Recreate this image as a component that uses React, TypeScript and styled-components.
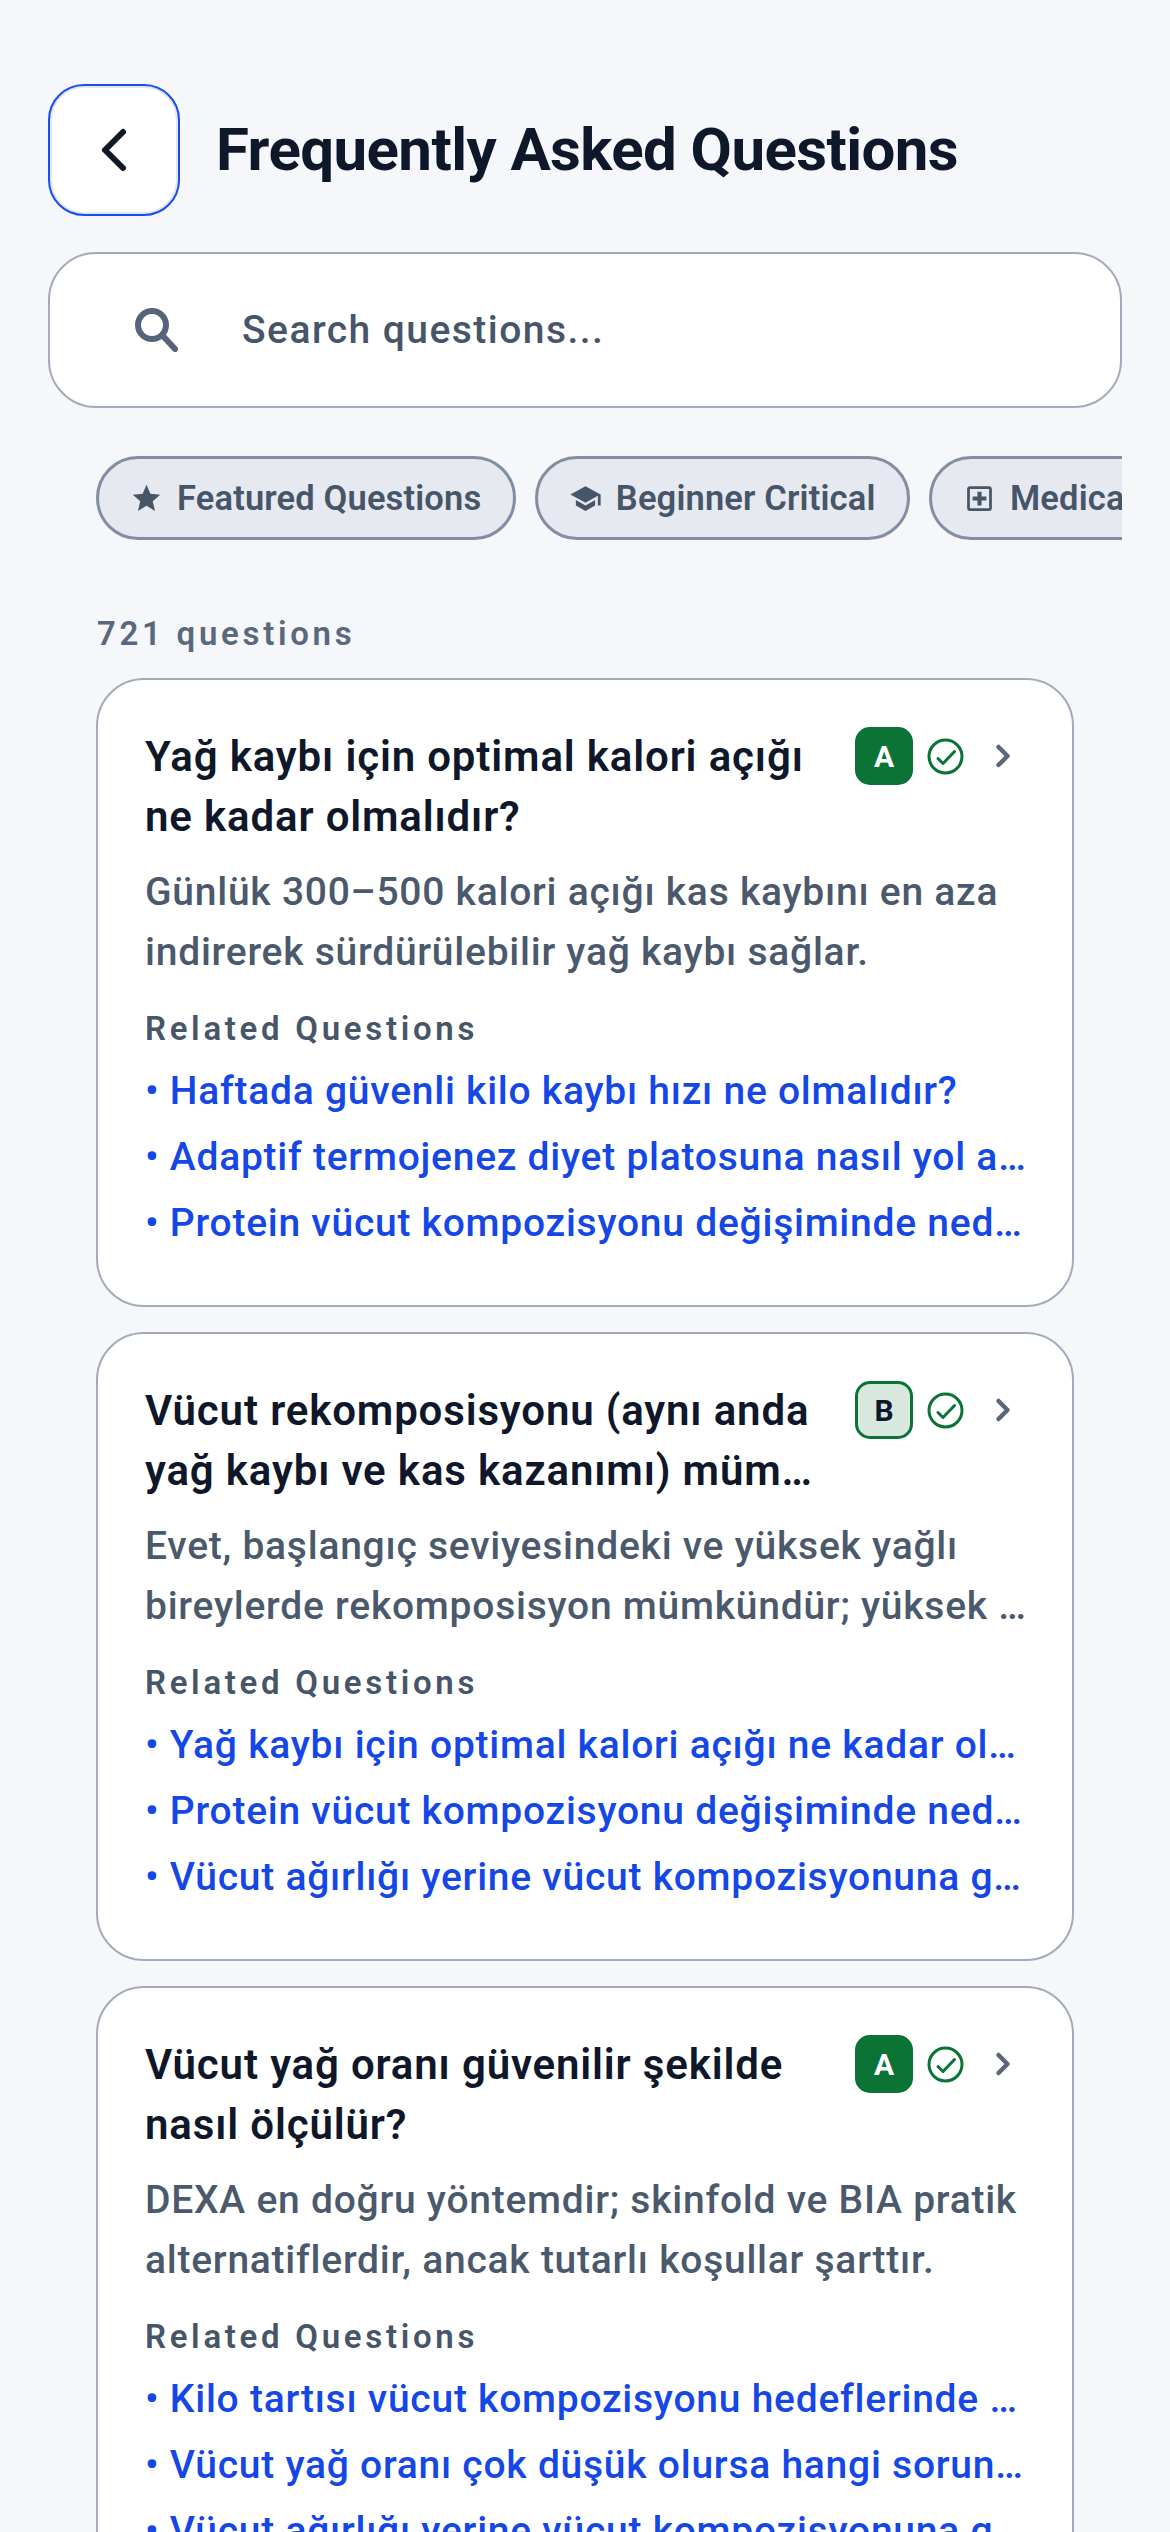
import styled, { createGlobalStyle } from "styled-components";
import { ChevronLeft, ChevronRight } from "lucide-react";
import { MdStar, MdSchool, MdOutlineLocalHospital } from "react-icons/md";

const GlobalStyle = createGlobalStyle`
  html, body {
    margin: 0;
    background: #f5f7fb;
    font-family: Roboto, "Noto Sans", sans-serif;
  }
`;

const questions = [
  {
    title: ["Yağ kaybı için optimal kalori açığı", "ne kadar olmalıdır?"],
    grade: "A",
    body: ["Günlük 300–500 kalori açığı kas kaybını en aza", "indirerek sürdürülebilir yağ kaybı sağlar."],
    related: [
      "Haftada güvenli kilo kaybı hızı ne olmalıdır?",
      "Adaptif termojenez diyet platosuna nasıl yol açar?",
      "Protein vücut kompozisyonu değişiminde neden önemlidir?",
    ],
  },
  {
    title: ["Vücut rekomposisyonu (aynı anda", "yağ kaybı ve kas kazanımı) mümkün müdür?"],
    grade: "B",
    body: [
      "Evet, başlangıç seviyesindeki ve yüksek yağlı",
      "bireylerde rekomposisyon mümkündür; yüksek protein gerektirir.",
    ],
    related: [
      "Yağ kaybı için optimal kalori açığı ne kadar olmalıdır?",
      "Protein vücut kompozisyonu değişiminde neden önemlidir?",
      "Vücut ağırlığı yerine vücut kompozisyonuna göre mi izlemeliyim?",
    ],
  },
  {
    title: ["Vücut yağ oranı güvenilir şekilde", "nasıl ölçülür?"],
    grade: "A",
    body: ["DEXA en doğru yöntemdir; skinfold ve BIA pratik", "alternatiflerdir, ancak tutarlı koşullar şarttır."],
    related: [
      "Kilo tartısı vücut kompozisyonu hedeflerinde neden yanıltıcıdır?",
      "Vücut yağ oranı çok düşük olursa hangi sorunlar oluşur?",
      "Vücut ağırlığı yerine vücut kompozisyonuna göre mi izlemeliyim?",
    ],
  },
];

const Page = styled.div`
  height: 2532px;
  overflow: hidden;
  box-sizing: border-box;
  padding-top: 84px;
  background: #f5f7fb;
`;

const Header = styled.header`
  display: flex;
  align-items: center;
  gap: 36px;
  padding: 0 48px;
`;

const BackButton = styled.button`
  width: 132px;
  height: 132px;
  box-sizing: border-box;
  display: flex;
  align-items: center;
  justify-content: center;
  padding: 0;
  background: #fff;
  border: 4px solid #e2e6ee;
  border-radius: 36px;
  outline: 2px solid #1a4fef;
  outline-offset: -2px;
  color: #111827;
`;

const Title = styled.h1`
  margin: 0;
  font-size: 60px;
  line-height: 72px;
  font-weight: 700;
  letter-spacing: -0.58px;
  color: #0f172a;
`;

const SearchBox = styled.div`
  margin: 36px 48px 0;
  height: 156px;
  box-sizing: border-box;
  display: flex;
  align-items: center;
  gap: 63px;
  padding-left: 85px;
  background: #fff;
  border: 2px solid #a3abba;
  border-radius: 48px;
`;

const SearchText = styled.span`
  font-size: 39px;
  font-weight: 500;
  letter-spacing: 1.45px;
  color: #475569;
`;

const ChipRow = styled.div`
  margin: 48px 48px 0;
  padding-left: 48px;
  display: flex;
  gap: 19px;
  overflow: hidden;
`;

const Chip = styled.div`
  flex: none;
  height: 84px;
  box-sizing: border-box;
  display: flex;
  align-items: center;
  gap: 14px;
  padding: 0 31.5px 0 31px;
  background: #e6e9ef;
  border: 3px solid #848ea2;
  border-radius: 42px;
  font-size: 34.5px;
  font-weight: 600;
  letter-spacing: 0.15px;
  color: #475569;
`;

const Count = styled.div`
  margin: 73px 96px 0;
  padding-left: 1px;
  font-size: 33px;
  line-height: 42px;
  font-weight: 600;
  letter-spacing: 3.7px;
  color: #5a687d;
`;

const CardList = styled.div`
  margin: 23px 96px 0;
  display: flex;
  flex-direction: column;
  gap: 25px;
`;

const Card = styled.article`
  box-sizing: border-box;
  height: 629px;
  flex: none;
  padding: 47px 45px 47px 47px;
  background: #fff;
  border: 2px solid #a3abba;
  border-radius: 48px;
`;

const CardTop = styled.div`
  display: flex;
  align-items: flex-start;
  gap: 36px;
`;

const CardTitle = styled.h2`
  flex: 1;
  min-width: 0;
  margin: 0;
  font-size: 42px;
  line-height: 60px;
  font-weight: 600;
  letter-spacing: 0.85px;
  color: #0f172a;
`;

const Line = styled.span`
  display: block;
  white-space: nowrap;
  overflow: hidden;
  text-overflow: ellipsis;
`;

const Marks = styled.div`
  flex: none;
  display: flex;
  align-items: center;
  gap: 13px;
  padding-right: 6px;
  color: #0b7335;
`;

const Grade = styled.span<{ $solid: boolean }>`
  width: 58px;
  height: 58px;
  box-sizing: border-box;
  display: flex;
  align-items: center;
  justify-content: center;
  border-radius: 15px;
  font-size: 30px;
  font-weight: 700;
  color: ${(p) => (p.$solid ? "#fff" : "#0f172a")};
  background: ${(p) => (p.$solid ? "#0b7335" : "#d9e8df")};
  border: ${(p) => (p.$solid ? "none" : "3px solid #0b7335")};
`;

const Arrow = styled.span`
  display: flex;
  margin-left: 7px;
  color: #5b6678;
`;

const CardBody = styled.p`
  margin: 15px 0 0;
  font-size: 39px;
  line-height: 60px;
  letter-spacing: 0.75px;
  font-weight: 500;
  color: #4b596d;
`;

const RelatedLabel = styled.div`
  margin-top: 26px;
  font-size: 33px;
  line-height: 42px;
  font-weight: 600;
  letter-spacing: 3.7px;
  color: #475569;
`;

const RelatedLink = styled.div`
  margin-top: 20px;
  font-size: 39px;
  line-height: 42px;
  font-weight: 500;
  letter-spacing: 0.75px;
  color: #1447e6;
  white-space: nowrap;
  overflow: hidden;
  text-overflow: ellipsis;

  & + & {
    margin-top: 24px;
  }
`;

const SearchIcon = () => (
  <svg width="44" height="44" viewBox="0 0 44 44" fill="none" stroke="#566479" strokeWidth="6" strokeLinecap="round">
    <circle cx="17" cy="17" r="14" />
    <path d="M28 28 L40 41" />
  </svg>
);

const CheckIcon = () => (
  <svg width="39" height="39" viewBox="0 0 39 39" fill="none" stroke="currentColor" strokeWidth="3" strokeLinecap="round" strokeLinejoin="round">
    <circle cx="19.5" cy="19.5" r="16.5" />
    <path d="M12 21.5 L17 26.5 L28.5 14.5" />
  </svg>
);

export default function App() {
  return (
    <Page>
      <GlobalStyle />
      <Header>
        <BackButton>
          <ChevronLeft size={72} strokeWidth={2} />
        </BackButton>
        <Title>Frequently Asked Questions</Title>
      </Header>
      <SearchBox>
        <SearchIcon />
        <SearchText>Search questions...</SearchText>
      </SearchBox>
      <ChipRow>
        <Chip><MdStar size={33} />Featured Questions</Chip>
        <Chip><MdSchool size={33} />Beginner Critical</Chip>
        <Chip><MdOutlineLocalHospital size={33} />Medical Topics</Chip>
      </ChipRow>
      <Count>721 questions</Count>
      <CardList>
        {questions.map((q) => (
          <Card key={q.title[0]}>
            <CardTop>
              <CardTitle>
                {q.title.map((t) => (
                  <Line key={t}>{t}</Line>
                ))}
              </CardTitle>
              <Marks>
                <Grade $solid={q.grade === "A"}>{q.grade}</Grade>
                <CheckIcon />
                <Arrow><ChevronRight size={36} strokeWidth={3} /></Arrow>
              </Marks>
            </CardTop>
            <CardBody>
              {q.body.map((t) => (
                <Line key={t}>{t}</Line>
              ))}
            </CardBody>
            <RelatedLabel>Related Questions</RelatedLabel>
            {q.related.map((r) => (
              <RelatedLink key={r}>• {r}</RelatedLink>
            ))}
          </Card>
        ))}
      </CardList>
    </Page>
  );
}
